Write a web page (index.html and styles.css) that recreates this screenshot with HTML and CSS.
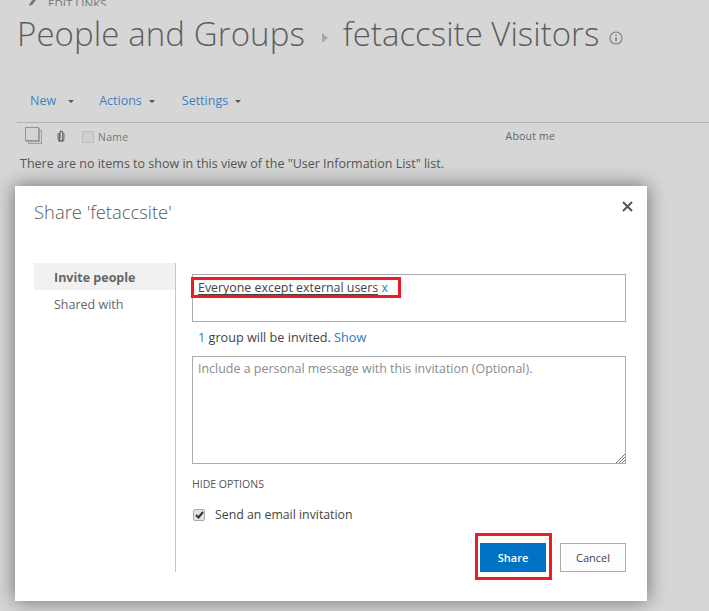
FILE: index.html
```html
<!DOCTYPE html>
<html lang="en">
<head>
<meta charset="utf-8">
<title>People and Groups</title>
<link rel="stylesheet" href="styles.css">
</head>
<body>
<div class="page">
  <div class="editlinks">
    <svg class="pencil" width="9" height="9" viewBox="0 0 9 9"><path d="M0 9l1-3 5-6 2 2-5 6z" fill="#777"/></svg>
    <span>EDIT LINKS</span>
  </div>
  <h1 class="title">
    <span class="title-first">People and Groups</span>
    <svg class="crumb" width="6" height="10" viewBox="0 0 6 10"><path d="M0 0l6 5-6 5z" fill="#a8a8a8"/></svg>
    <span>fetaccsite Visitors</span>
    <svg class="info" width="14" height="14" viewBox="0 0 14 14"><circle cx="7" cy="7" r="6" fill="none" stroke="#858585" stroke-width="1.2"/><rect x="6.3" y="6" width="1.5" height="4.5" fill="#858585"/><rect x="6.3" y="3.4" width="1.5" height="1.5" fill="#858585"/></svg>
  </h1>
  <nav class="toolbar">
    <a class="tool tool-new">New<i class="caret caret-new"></i></a>
    <a class="tool tool-actions">Actions<i class="caret"></i></a>
    <a class="tool">Settings<i class="caret"></i></a>
  </nav>
  <div class="headrow">
    <svg class="hicon-pages" width="17" height="17" viewBox="0 0 17 17"><rect x="3.5" y="3.5" width="13" height="13" fill="#cfcfcf" stroke="#9aa1a8"/><rect x="1.5" y="1.5" width="13" height="13" fill="#cfcfcf" stroke="#9aa1a8"/><rect x="0.5" y="0.5" width="13" height="13" fill="#d4d4d4" stroke="#8f979f"/></svg>
    <svg class="hicon-clip" width="8" height="12" viewBox="0 0 8 12"><path d="M2.2 3v6a1.8 1.8 0 0 0 3.6 0V2.6a1.4 1.4 0 0 0-2.8 0V8.500" fill="none" stroke="#666" stroke-width="1.300"/><path d="M1 3v6a3 3 0 0 0 6 0V3" fill="none" stroke="#777" stroke-width="1"/></svg>
    <span class="hcheck"></span>
    <span class="hname">Name</span>
    <span class="habout">About me</span>
  </div>
  <p class="empty">There are no items to show in this view of the "User Information List" list.</p>
</div>

<section class="dialog">
  <header class="dialog-head">
    <h2 class="dialog-title">Share 'fetaccsite'</h2>
    <svg class="close" width="11" height="11" viewBox="0 0 11 11"><path d="M1 1l9 9M10 1l-9 9" stroke="#555" stroke-width="2" fill="none"/></svg>
  </header>
  <div class="dialog-body">
    <aside class="side">
      <div class="side-item side-active">Invite people</div>
      <div class="side-item">Shared with</div>
    </aside>
    <div class="main">
      <div class="picker"><span class="entity">Everyone except external users</span> <span class="remove">x</span></div>
      <p class="invited"><span class="count">1</span> group will be invited. <a class="show">Show</a></p>
      <div class="message">
        <span>Include a personal message with this invitation (Optional).</span>
        <svg class="grip" width="9" height="9" viewBox="0 0 9 9"><path d="M9 0L0 9M9 3L3 9M9 6L6 9" stroke="#777" stroke-width="1" fill="none"/></svg>
      </div>
      <div class="hide-options">HIDE OPTIONS</div>
      <label class="email">
        <span class="check"><svg width="9" height="8" viewBox="0 0 9 8"><path d="M1 4l2.500 2.500L8 1" stroke="#333" stroke-width="2" fill="none"/></svg></span>
        <span>Send an email invitation</span>
      </label>
      <div class="actions">
        <button class="btn btn-primary" type="button">Share</button>
        <button class="btn" type="button">Cancel</button>
      </div>
    </div>
  </div>
</section>

<div class="mark mark-picker"></div>
<div class="mark mark-share"></div>
</body>
</html>
```

FILE: styles.css
```css
* { box-sizing: border-box; }
html, body { margin: 0; height: 611px; overflow: hidden; }
body {
  background: #d6d6d6;
  font-family: "Open Sans", "Liberation Sans", sans-serif;
  font-size: 12px;
  color: #4a4a4a;
  position: relative;
  width: 709px;
}
.page { padding-left: 17px; }
.editlinks {
  height: 6px;
  margin-left: 12px;
  display: flex;
  align-items: flex-end;
  gap: 10px;
  font-size: 11.500px;
  line-height: 10px;
  color: #777;
  overflow: hidden;
}
.editlinks span { position: relative; top: 3px; }
.title {
  margin: 0;
  height: 57px;
  padding-top: 4px;
  display: flex;
  align-items: flex-start;
  font-size: 33px;
  line-height: 48px;
  font-weight: 300;
  color: #5e5e5e;
  white-space: nowrap;
}
.title-first { letter-spacing: 0.090px; }
.crumb { margin: 23px 15px 0 17px; flex: none; }
.info { margin: 21px 0 0 10px; flex: none; }
.toolbar {
  margin-top: 29px;
  height: 31px;
  padding-left: 13px;
  display: flex;
  align-items: flex-start;
  font-size: 12.500px;
  line-height: 17px;
  color: #3f7fbf;
  border-bottom: 1px solid #b4b4b4;
}
.tool { display: flex; align-items: center; margin-right: 27px; }
.tool-new { margin-right: 25px; }
.caret {
  width: 0;
  height: 0;
  margin-left: 7px;
  margin-top: 1px;
  border-left: 3px solid transparent;
  border-right: 3px solid transparent;
  border-top: 3px solid #555;
}
.caret-new { margin-left: 12px; }
.headrow {
  display: flex;
  align-items: center;
  height: 26px;
  position: relative;
  padding-left: 8px;
  font-size: 10.500px;
  color: #777;
  letter-spacing: 0.300px;
}
.hicon-pages { margin-top: -2px; }
.hicon-clip { margin-left: 15px; margin-top: -1px; }
.hcheck {
  width: 12px;
  height: 12px;
  margin-left: 17px;
  margin-top: 2px;
  border: 1px solid #bbb;
  border-radius: 1px;
  background: #d0d0d0;
}
.hname { margin-left: 4px; margin-top: 1px; }
.habout { margin-left: 377px; margin-top: -1px; color: #666; letter-spacing: 0.200px; }
.empty {
  margin: 6px 0 0 3px;
  font-size: 12.500px;
  line-height: 17px;
  color: #555;
  white-space: nowrap;
}
.dialog {
  position: absolute;
  left: 15px;
  top: 186px;
  width: 632px;
  height: 415px;
  background: #fff;
  box-shadow: 0 0 18px rgba(0, 0, 0, 0.5);
  padding: 0 21px 0 19px;
}
.dialog-head {
  height: 77px;
  display: flex;
  justify-content: space-between;
  align-items: flex-start;
}
.dialog-title {
  margin: 14px 0 0;
  font-size: 18.400px;
  line-height: 24px;
  font-weight: 300;
  color: #555a5e;
}
.close { margin: 15px -7px 0 0; }
.dialog-body { display: flex; height: 309px; }
.side {
  width: 142px;
  border-right: 1px solid #c6c6c6;
  font-size: 12.500px;
  color: #666;
  flex: none;
}
.side-item { height: 27px; line-height: 29px; padding-left: 20px; }
.side-active { background: #f1f1f1; font-weight: 700; }
.main { flex: 1; padding: 11px 0 0 16px; }
.picker {
  height: 48px;
  border: 1px solid #ababab;
  padding: 3px 5px;
  font-size: 12.400px;
  line-height: 19px;
  color: #444;
}
.entity { border-bottom: 1px solid #444; display: inline-block; line-height: 16px; height: 15px; }
.remove { color: #2b7cc2; }
.invited {
  margin: 7px 0 0;
  height: 20px;
  padding-left: 6px;
  font-size: 12.650px;
  line-height: 17px;
  color: #444;
}
.count { color: #2b7cc2; }
.show { color: #2b7cc2; }
.message {
  position: relative;
  margin-top: 7px;
  height: 108px;
  border: 1px solid #ababab;
  padding: 3px 5px;
  font-size: 12.450px;
  line-height: 17px;
  color: #8a8a8a;
}
.grip { position: absolute; right: 0; bottom: 0; }
.hide-options {
  margin-top: 12px;
  font-size: 10.500px;
  line-height: 16px;
  color: #555;
}
.email {
  display: flex;
  align-items: center;
  margin-top: 14px;
  padding-left: 1px;
  font-size: 12.300px;
  line-height: 17px;
  color: #444;
  gap: 10px;
}
.check {
  width: 12px;
  height: 12px;
  border: 1px solid #aaa;
  border-radius: 2px;
  background: #e3e3e3;
  display: flex;
  align-items: center;
  justify-content: center;
}
.actions {
  display: flex;
  justify-content: flex-end;
  gap: 14px;
  margin-top: 20px;
}
.btn {
  width: 66px;
  height: 29px;
  padding: 0;
  border: 1px solid #ababab;
  background: #fdfdfd;
  font-family: inherit;
  font-size: 11px;
  color: #444;
}
.btn-primary {
  background: #0072c6;
  border-color: #0072c6;
  color: #fff;
  font-weight: 600;
}
.mark { position: absolute; border: 3px solid #ed1c24; }
.mark-picker { left: 191px; top: 277px; width: 210px; height: 21px; }
.mark-share { left: 475px; top: 533px; width: 77px; height: 47px; }
```
